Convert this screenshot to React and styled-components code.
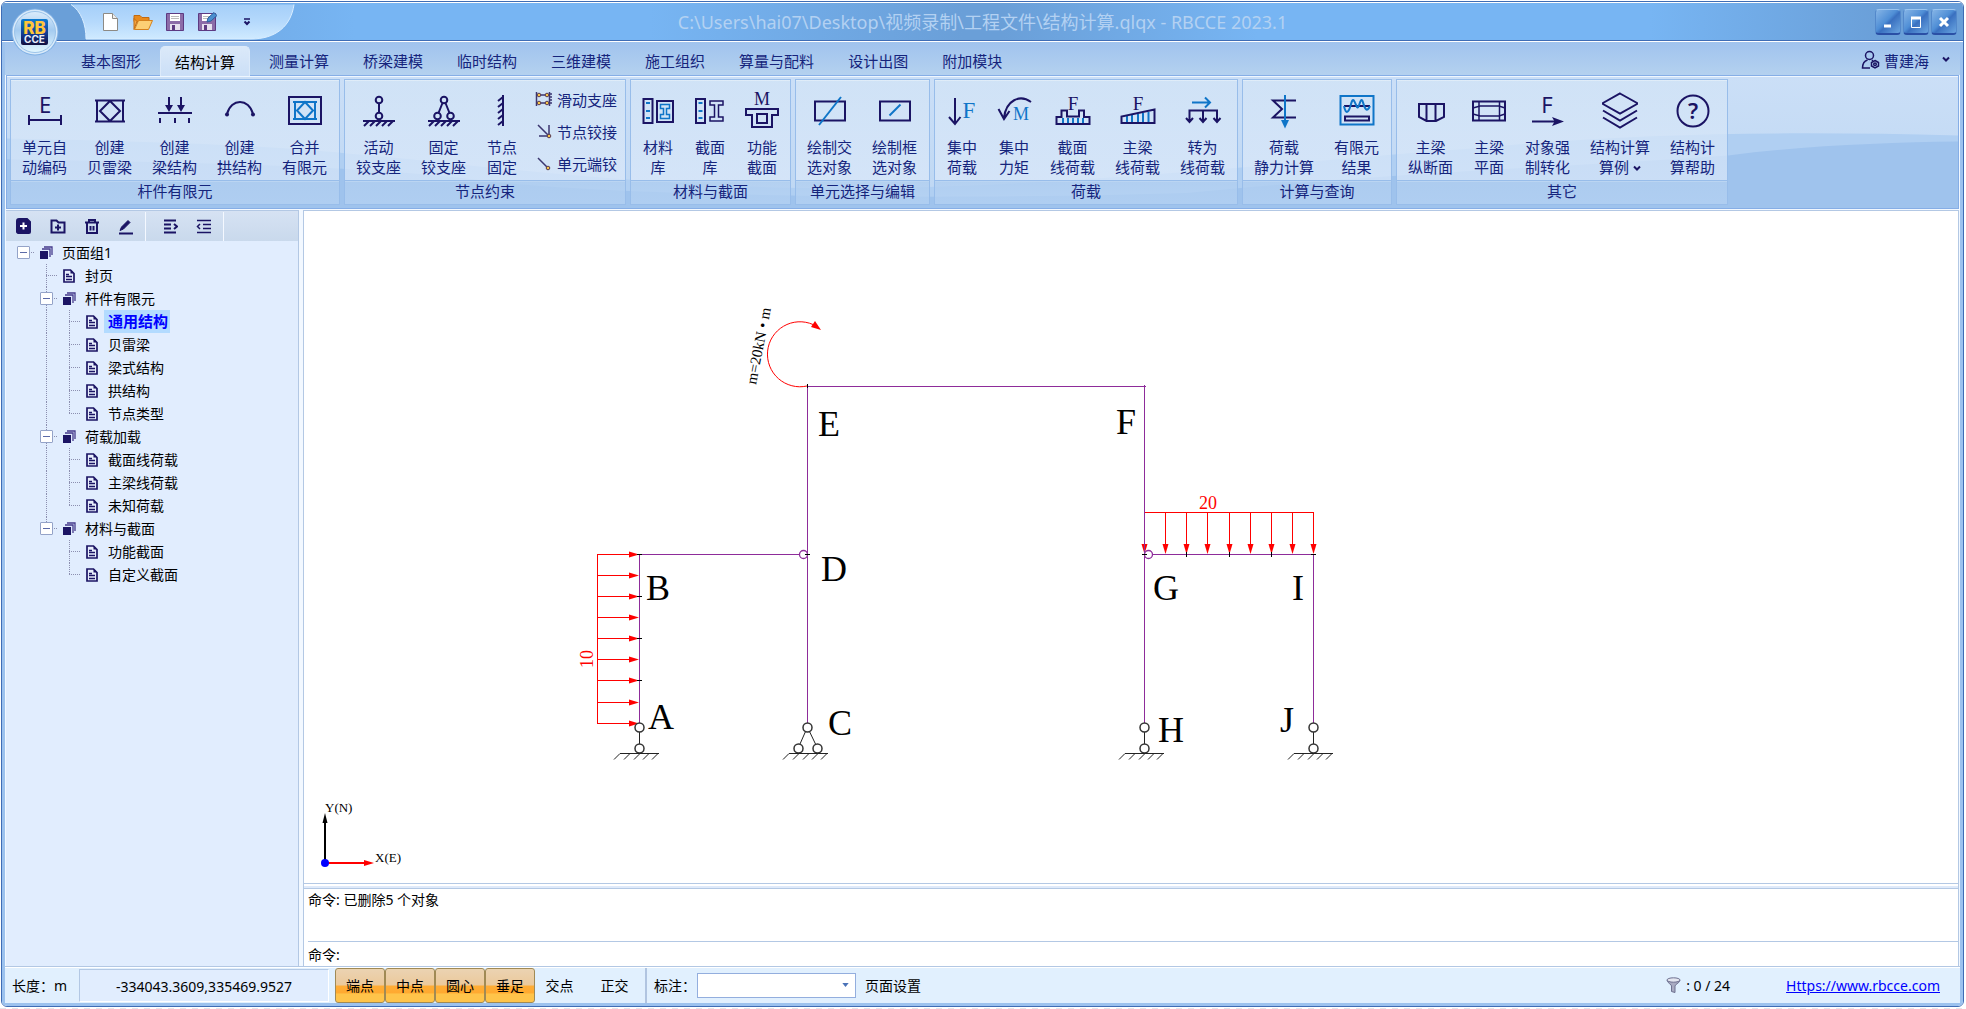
import { useState } from "react";
import styled, { createGlobalStyle } from "styled-components";

const NAVY = "#1b1464";
const BLUE = "#0f75c8";
const SERIF = '"Liberation Serif", "Noto Sans CJK SC", serif';
const SANS = '"Noto Sans", "Noto Sans CJK SC", sans-serif';

/* ================= ribbon icons (36 x 38) ================= */
const HATCH = [8, 14, 20, 26, 32];

const ground = (
  <path d={`M2 29H34${HATCH.map((x) => `M${x} 29l-5 5`).join("")}`} />
);

const bailey = (
  <path d="M3 8.5H33M3 29.5H33M5 8.5V29.5M31 8.5V29.5M18 9L28 19L18 29L8 19Z" />
);

const ICONS = {
  unitNo: (
    <>
      <path d="M2 28H34M2 23V33M34 23V33" />
      <text x="18" y="21" fontSize="22">E</text>
    </>
  ),
  bailey,
  beam: (
    <>
      <path d="M1 21H35M3 26V31M18 26V31M32 26V31M12 5V17M24 5V17" />
      <path className="fill" d="M8 13L12 20L16 13ZM20 13L24 20L28 13Z" />
    </>
  ),
  arch: (
    <>
      <path d="M5 22C9 6 27 6 31 22" />
      <circle className="fill" cx="5" cy="22.5" r="2" />
      <circle className="fill" cx="31" cy="22.5" r="2" />
    </>
  ),
  merge: (
    <>
      <rect x="2" y="5" width="32" height="27" />
      <path className="blue" d="M6 10H30M6 27H30M8 10V27M28 10V27M18 10L26 18.5L18 27L10 18.5Z" />
    </>
  ),
  roller: (
    <>
      <circle cx="18" cy="8" r="3.3" />
      <path d="M18 11.5V20.5" />
      <circle cx="18" cy="24" r="3.3" />
      {ground}
    </>
  ),
  pinned: (
    <>
      <circle cx="18" cy="8" r="3.3" />
      <path d="M16.5 11L12.5 21M19.5 11L23.5 21" />
      <circle cx="11.5" cy="24" r="3.3" />
      <circle cx="24.5" cy="24" r="3.3" />
      {ground}
    </>
  ),
  fixed: <path d="M19 3V34M19 5l-5 4M19 11l-5 4M19 17l-5 4M19 23l-5 4M19 29l-5 4" />,
  material: (
    <>
      <rect x="3.5" y="7" width="9" height="24" />
      <rect x="17" y="9" width="16" height="21" />
      <path className="blue" d="M6 11h4M6 19h4M6 26h4" />
      <path className="blue thin" d="M20.5 12.5h9v4h-3v6h3v4h-9v-4h3v-6h-3z" />
    </>
  ),
  section: (
    <>
      <rect x="4" y="7" width="9" height="24" />
      <path className="blue" d="M6.5 11h4M6.5 19h4M6.5 26h4" />
      <path className="thin" d="M18 9h13v4h-4.500v12h4.500v4h-13v-4h4.500v-12h-4.500z" />
    </>
  ),
  funcSection: (
    <>
      <text className="serif" x="18" y="13" fontSize="18">M</text>
      <path d="M2 17H34V23H28V35H8V23H2Z" />
      <rect x="13" y="22" width="10" height="9" />
    </>
  ),
  crossSelect: (
    <>
      <rect x="3" y="9.5" width="30" height="19" />
      <path className="blue" d="M7 33L29 5" />
    </>
  ),
  boxSelect: (
    <>
      <rect x="3" y="9.5" width="30" height="19" />
      <path className="blue" d="M12.5 23.5L23.5 12.5" />
    </>
  ),
  force: (
    <>
      <path d="M11 6V32M5 25L11 32L16.5 25" />
      <text className="serif blueText" x="25" y="26" fontSize="23">F</text>
    </>
  ),
  moment: (
    <>
      <path d="M35 10C24 2 10 8 8 26M2.5 17L8 27L13.5 19" />
      <text className="serif blueText" x="25" y="28" fontSize="18">M</text>
    </>
  ),
  sectionLoad: (
    <>
      <path className="blue" d="M8 26V31M13 26V31M18 26V31M23 26V31M28 26V31" />
      <path d="M1.5 32V25H6.5V18.5H12V24.5H24V18.5H29V25H34.5V32Z" />
      <text className="serif" x="18" y="18" fontSize="19">F</text>
    </>
  ),
  girderLoad: (
    <>
      <path className="blue" d="M7 24V30M12 23V30M18 22V30M23 21V30M28.5 20V30" />
      <path d="M1.5 31V24.5L34.5 17.5V31Z" />
      <text className="serif" x="18" y="18" fontSize="19">F</text>
    </>
  ),
  convert: (
    <>
      <path className="blue" d="M7 10.5H25M20 5.5L25 10.5L20 15.5" />
      <path d="M4.5 29.5V18.5H32V29.5M18 18.5V29.5M1 26l3.5 4l3.5-4M14.5 26l3.5 4l3.5-4M28.5 26l3.5 4l3.5-4" />
    </>
  ),
  calc: (
    <>
      <path d="M30 8.5H7L16 17L7 25.5H30" />
      <path className="blue" d="M19 3V30" />
      <path className="blueFill" d="M15 28H23L19 36.5Z" />
    </>
  ),
  result: (
    <>
      <path d="M5 14H31" />
      <rect x="6" y="24.5" width="24" height="4" />
      <path className="blue" d="M5 14C7 24 10 20 12 12C14 5 15 8 17.5 14C20 20 21 4 23.5 9C25 13 27 23 31 14" />
      <rect className="blue" x="1.5" y="4" width="33" height="28.5" />
    </>
  ),
  longSection: <path d="M6 12H31V25L23 29H13.5L6 25ZM13.5 12V29M22.5 12V29" />,
  plan: (
    <>
      <rect x="2" y="9.5" width="32" height="19" />
      <path className="thin" d="M8 9.5V28.5M28.5 9.5V28.5" />
      <path className="thin" d="M2 16L9 14H28L34 16M2 22L9 24H28L34 22" />
    </>
  ),
  forceConvert: (
    <>
      <text x="17" y="21" fontSize="22">F</text>
      <path d="M2 29.5H26" />
      <path className="fill" d="M22 25L34 29.5L22 34L24.5 29.5Z" />
    </>
  ),
  layers: (
    <path d="M18 1.5L35 11V12L18 21.5L1 12V11ZM1 18.5L18 28.5L35 18.5M1 25.5L18 35.5L35 25.5" />
  ),
  help: (
    <>
      <circle cx="18" cy="19" r="15.5" />
      <text x="18" y="27" fontSize="22" fontWeight="600">?</text>
    </>
  ),
};

const SMALL_ICONS = {
  slider: (
    <>
      <path d="M1.5 1V15M14.5 1V15M3 4H13M3 12H13" />
      <path d="M15 3h2M15 6h2M15 9h2M15 12h2" />
      {[[4, 4], [12, 4], [4, 12], [12, 12]].map(([x, y]) => (
        <circle key={`${x}-${y}`} className="joint" cx={x} cy={y} r="1.8" />
      ))}
    </>
  ),
  nodeHinge: (
    <>
      <path d="M3 2L13 12M4 13H13M14 2V12" />
      <circle className="joint" cx="14" cy="13" r="1.8" />
    </>
  ),
  endHinge: (
    <>
      <path d="M3 3L12 12" />
      <circle className="joint" cx="13" cy="13" r="1.8" />
    </>
  ),
};

/* ================= data ================= */
const TABS = [
  "基本图形", "结构计算", "测量计算", "桥梁建模", "临时结构",
  "三维建模", "施工组织", "算量与配料", "设计出图", "附加模块",
];

const GROUPS = [
  {
    title: "杆件有限元",
    items: [
      ["unitNo", "单元自", "动编码"],
      ["bailey", "创建", "贝雷梁"],
      ["beam", "创建", "梁结构"],
      ["arch", "创建", "拱结构"],
      ["merge", "合并", "有限元"],
    ],
  },
  {
    title: "节点约束",
    items: [
      ["roller", "活动", "铰支座"],
      ["pinned", "固定", "铰支座"],
      ["fixed", "节点", "固定"],
    ],
    small: [
      ["slider", "滑动支座"],
      ["nodeHinge", "节点铰接"],
      ["endHinge", "单元端铰"],
    ],
  },
  {
    title: "材料与截面",
    items: [
      ["material", "材料", "库"],
      ["section", "截面", "库"],
      ["funcSection", "功能", "截面"],
    ],
  },
  {
    title: "单元选择与编辑",
    items: [
      ["crossSelect", "绘制交", "选对象"],
      ["boxSelect", "绘制框", "选对象"],
    ],
  },
  {
    title: "荷载",
    items: [
      ["force", "集中", "荷载"],
      ["moment", "集中", "力矩"],
      ["sectionLoad", "截面", "线荷载"],
      ["girderLoad", "主梁", "线荷载"],
      ["convert", "转为", "线荷载"],
    ],
  },
  {
    title: "计算与查询",
    items: [
      ["calc", "荷载", "静力计算"],
      ["result", "有限元", "结果"],
    ],
  },
  {
    title: "其它",
    items: [
      ["longSection", "主梁", "纵断面"],
      ["plan", "主梁", "平面"],
      ["forceConvert", "对象强", "制转化"],
      ["layers", "结构计算", "算例", true],
      ["help", "结构计", "算帮助"],
    ],
  },
];

// guides: " " blank, "|" line, "t" tee, "l" corner, "+" / "r" / "e" expander (middle / root / last)
const TREE = [
  { guides: "r", folder: true, label: "页面组1" },
  { guides: " t", label: "封页" },
  { guides: " +", folder: true, label: "杆件有限元" },
  { guides: " |t", label: "通用结构" },
  { guides: " |t", label: "贝雷梁" },
  { guides: " |t", label: "梁式结构" },
  { guides: " |t", label: "拱结构" },
  { guides: " |l", label: "节点类型" },
  { guides: " +", folder: true, label: "荷载加载" },
  { guides: " |t", label: "截面线荷载" },
  { guides: " |t", label: "主梁线荷载" },
  { guides: " |l", label: "未知荷载" },
  { guides: " e", folder: true, label: "材料与截面" },
  { guides: "  t", label: "功能截面" },
  { guides: "  l", label: "自定义截面" },
];

const SNAPS = ["端点", "中点", "圆心", "垂足", "交点", "正交"];

// narrow buttons hold two characters, wide ones three or four
const widthOf = (a, b) => {
  const n = Math.max(a.length, b.length);
  return n > 3 ? 80 : n > 2 ? 65 : 52;
};

/* ================= drawing ================= */
const SIDE_LOAD_Y = [554, 575, 596, 617, 638, 659, 680, 702, 723];
const TOP_LOAD_X = [1144, 1165, 1186, 1207, 1229, 1250, 1271, 1292, 1313];

const NODE_LABELS = [
  ["A", 648, 729], ["B", 646, 600], ["C", 828, 735], ["D", 821, 581], ["E", 818, 436],
  ["F", 1116, 434], ["G", 1153, 600], ["H", 1158, 742], ["I", 1292, 600], ["J", 1280, 732],
];

function Ground({ x }) {
  return (
    <path
      d={`M${x - 19} 753.5H${x + 20}${[-19, -9, 1, 10, 19].map((d) => `M${x + d} 753.5l-6 6`).join("")}`}
    />
  );
}

function Support({ x }) {
  return (
    <g className="support">
      <path d={`M${x + 0.5} 732V744`} />
      <circle cx={x + 0.5} cy="727.5" r="4.5" />
      <circle cx={x + 0.5} cy="748.5" r="4.5" />
      <Ground x={x} />
    </g>
  );
}

function StructureDrawing() {
  return (
    <Drawing role="img" aria-label="结构计算简图">
      <g transform="translate(-304 -211)">
        <g className="load">
          <path d="M597.5 554V724" />
          {SIDE_LOAD_Y.map((y) => (
            <g key={y}>
              <path d={`M597 ${y + 0.5}H630`} />
              <path className="head" d={`M629 ${y - 2.5}V${y + 3.5}L639 ${y + 0.5}Z`} />
            </g>
          ))}
          <path d="M1144 512.5H1314" />
          {TOP_LOAD_X.map((x) => (
            <g key={x}>
              <path d={`M${x + 0.5} 512V545`} />
              <path className="head" d={`M${x - 2.5} 544H${x + 3.5}L${x + 0.5} 554Z`} />
            </g>
          ))}
          <path className="arc" d="M807 386A32.5 32.5 0 1 1 813 324.5" />
          <path className="head" d="M811 327L815 321L821 330Z" />
        </g>

        <g className="member">
          <path d="M639.5 554V723M639 554.5H799M807.5 385V723M807 386.5H1146M1144.5 385V723M1153 554.5H1314M1313.5 554V723" />
          <circle cx="803.5" cy="554.5" r="4" />
          <circle cx="1148.5" cy="554.5" r="4" />
        </g>
        <path
          className="tick"
          d="M637 554.5h5M637 596.5h5M637 638.5h5M637 680.5h5M805 554.5h5M1142 554.5h5M1186.5 552v5M1229.5 552v5M1271.5 552v5M1311 554.5h5M807.5 384v4"
        />

        <Support x={639} />
        <Support x={1144} />
        <Support x={1313} />
        <g className="support">
          <path d="M805.5 731.5L800 744M809.5 731.5L815.5 744" />
          <circle cx="807.5" cy="727.5" r="4.5" />
          <circle cx="798.5" cy="748.5" r="4.5" />
          <circle cx="817.5" cy="748.5" r="4.5" />
          <Ground x={808} />
        </g>

        {NODE_LABELS.map(([name, x, y]) => (
          <text key={name} x={x} y={y} fontSize="36">{name}</text>
        ))}
        <text x="1199" y="509" fontSize="18" className="redText">20</text>
        <text transform="translate(593 668) rotate(-90)" fontSize="18" className="redText">10</text>
        <text transform="translate(756 385) rotate(-79)" fontSize="15">m=20kN • m</text>

        {/* coordinate axes */}
        <path d="M325 863V822" stroke="#000" strokeWidth="2" />
        <path d="M322.5 823H327.5L325 813Z" fill="#000" />
        <path d="M325 863H365" stroke="#f00" strokeWidth="2" />
        <path d="M364 860V866L374 863Z" fill="#f00" />
        <circle cx="325" cy="863" r="4" fill="#00f" />
        <text x="325" y="812" fontSize="13">Y(N)</text>
        <text x="375" y="862" fontSize="13">X(E)</text>
      </g>
    </Drawing>
  );
}

/* ================= small drawings ================= */
function Logo() {
  return (
    <svg width="48" height="48" viewBox="0 0 48 48" aria-hidden="true">
      <defs>
        <linearGradient id="orb" x1="0" y1="0" x2="0" y2="1">
          <stop offset="0" stopColor="#dcecfb" />
          <stop offset="0.45" stopColor="#a4cbf0" />
          <stop offset="1" stopColor="#e3f7ff" />
        </linearGradient>
        <linearGradient id="plate" x1="0" y1="0" x2="0" y2="1">
          <stop offset="0" stopColor="#0d7bd0" />
          <stop offset="0.6" stopColor="#11378c" />
          <stop offset="1" stopColor="#14103f" />
        </linearGradient>
      </defs>
      <circle cx="24" cy="24" r="23.5" fill="#7fb0e4" />
      <circle cx="24" cy="24" r="22.5" fill="#d9eafa" />
      <circle cx="24" cy="24" r="20.5" fill="url(#orb)" stroke="#9cc4ea" />
      <rect x="10" y="11" width="27" height="26" rx="2" fill="url(#plate)" />
      <text x="23.5" y="26" textAnchor="middle" fontFamily="Inter" fontWeight="800" fontSize="17" fill="#ffc53a">RB</text>
      <text x="23.5" y="35" textAnchor="middle" fontFamily="Inter" fontWeight="700" fontSize="10" fill="#e9eefa">CCE</text>
    </svg>
  );
}

const floppy = (
  <>
    <path d="M1.5 1.5h17v17h-17z" fill="#8c6ca8" stroke="#5d3a82" />
    <path d="M5 2h10v7H5z" fill="#fff" />
    <path d="M6 4.5h8M6 6.5h8" stroke="#bbb" />
    <path d="M5 12h10v6H5z" fill="#e6e0ee" />
    <path d="M7 13h3v5H7z" fill="#5d3a82" />
  </>
);

const QUICK = {
  新建: (
    <>
      <path d="M2.5 1.5h9l5 5v12h-14z" fill="#fff" stroke="#8d8a84" />
      <path d="M11.5 1.5v5h5" fill="#eee" stroke="#8d8a84" />
    </>
  ),
  打开: (
    <>
      <path d="M1 3.5h6l2 2h7v4H1z" fill="#e98a1c" stroke="#c26a10" />
      <path d="M1 17.5V6.5l3 3z" fill="#f4a640" stroke="#c26a10" />
      <path d="M1.5 17.5l4-9h14l-4 9z" fill="#fccf74" stroke="#d5801c" />
    </>
  ),
  保存: floppy,
  另存为: (
    <>
      {floppy}
      <path d="M10 10l1-4 6-5.5 3 3-6 5.5z" fill="#4b8fd0" stroke="#2c5f9c" />
    </>
  ),
};

const TOOLS = [
  ["新建页面", <><path d="M3 1h8l3 3v10a1 1 0 0 1-1 1H3a2 2 0 0 1-2-1V3a2 2 0 0 1 2-2z" fill={NAVY} /><path d="M4 8h7M7.5 4.5v7" stroke="#fff" /></>],
  ["新建组", <><path d="M1.5 2.5h5l2 2h6v10h-13z" /><path d="M5 9.5h6M8 6.5v6" /></>],
  ["删除", <path d="M1 4.5h14M5 4V2h6v2M3 5v10h10V5M6.5 8v4.5M9.5 8v4.5" />],
  ["编辑", <><path d="M1 15.5h14" /><path d="M2 12.5l1.500-3.500L10 2.500l2 2L5.500 11z" fill={NAVY} strokeWidth="1" /></>],
  ["缩进", <path d="M2 2.5h12M2 6.5h7M2 10.5h7M2 14.5h12M12 6l3 2.5L12 11" />],
  ["取消缩进", <path d="M1 2.5h14M7 6.5h8M7 10.5h8M1 14.5h14M4 6L1.5 8.5L4 11" strokeWidth="1.5" />],
];

function Chevron() {
  return (
    <svg width="8" height="8" viewBox="0 0 8 8" aria-hidden="true">
      <path d="M1 1.5L4 4.5L7 1.5" fill="none" stroke={NAVY} strokeWidth="2" />
    </svg>
  );
}

const FolderIcon = () => (
  <svg width="14" height="14" viewBox="0 0 14 14" aria-hidden="true">
    <path d="M5 1H13V9M3 3H11V11" fill="none" stroke="#443a8c" strokeWidth="1.3" />
    <rect x="1" y="5" width="8" height="8" fill={NAVY} />
  </svg>
);

const PageIcon = () => (
  <svg width="12" height="14" viewBox="0 0 12 14" aria-hidden="true">
    <path d="M1 1h6.500L11 4.500V13H1z" fill="#e8eefc" stroke={NAVY} strokeWidth="1.7" />
    <path d="M7.500 1v3.500H11z" fill={NAVY} />
    <path d="M3 5.500h3M3 7.500h6M3 10.500h6" fill="none" stroke={NAVY} strokeWidth="1.3" />
  </svg>
);

/* ================= app ================= */
export default function App() {
  const [tab, setTab] = useState("结构计算");
  const [page, setPage] = useState("通用结构");
  const [snaps, setSnaps] = useState(["端点", "中点", "圆心", "垂足"]);
  const [command, setCommand] = useState("");

  const toggleSnap = (name) =>
    setSnaps((prev) =>
      prev.includes(name) ? prev.filter((s) => s !== name) : [...prev, name]
    );

  return (
    <Screen>
      <GlobalStyle />
      <Frame>
        <LogoButton aria-label="主菜单"><Logo /></LogoButton>
        <TitleBar>
          <QuickAccess>
            <QuickShape viewBox="0 0 224 36" preserveAspectRatio="none" aria-hidden="true">
              <defs>
                <linearGradient id="quick" x1="0" y1="0" x2="0" y2="1">
                  <stop offset="0" stopColor="#a5cff9" />
                  <stop offset="0.5" stopColor="#b5d9fc" />
                  <stop offset="1" stopColor="#cfeaff" />
                </linearGradient>
              </defs>
              <path d="M0 .5C10 7 15 20 15 35H180C205 35 220 22 223 .5" fill="url(#quick)" stroke="#d9edff" />
            </QuickShape>
            {Object.keys(QUICK).map((name) => (
              <QuickButton key={name} aria-label={name}>
                <svg width="20" height="20" viewBox="0 0 20 20" aria-hidden="true">{QUICK[name]}</svg>
              </QuickButton>
            ))}
            <QuickMore aria-label="自定义快速访问">
              <svg width="8" height="8" viewBox="0 0 8 8" aria-hidden="true">
                <path d="M1 1h6" stroke={NAVY} strokeWidth="1.3" />
                <path d="M1.5 3.5L4 6L6.5 3.5" fill="none" stroke={NAVY} strokeWidth="2" />
              </svg>
            </QuickMore>
          </QuickAccess>
          <Title>C:\Users\hai07\Desktop\视频录制\工程文件\结构计算.qlqx - RBCCE 2023.1</Title>
          <WindowButtons>
            <WindowButton aria-label="最小化">
              <svg width="14" height="14"><path d="M3 11h7" stroke="#fff" strokeWidth="3" /></svg>
            </WindowButton>
            <WindowButton aria-label="最大化">
              <svg width="14" height="14"><path d="M2.5 2v10.5h9V2" fill="none" stroke="#fff" /><path d="M2 3h10" stroke="#fff" strokeWidth="3" /></svg>
            </WindowButton>
            <WindowButton aria-label="关闭">
              <svg width="14" height="14"><path d="M3 3l8 8M11 3l-8 8" stroke="#fff" strokeWidth="3" /></svg>
            </WindowButton>
          </WindowButtons>
        </TitleBar>

        <Body>
          <TabStrip>
            <Tabs role="tablist">
              {TABS.map((name) => (
                <Tab key={name} role="tab" aria-selected={tab === name} $active={tab === name} onClick={() => setTab(name)}>
                  {name}
                </Tab>
              ))}
            </Tabs>
            <UserButton>
              <svg width="20" height="20" viewBox="0 0 20 20" fill="none" stroke={NAVY} strokeWidth="1.5" aria-hidden="true">
                <circle cx="8.5" cy="5.5" r="4" />
                <path d="M9 18H1.5C1.5 13.5 3.5 11 6.5 10M11 10L12 11" />
                <path d="M14 10.5l3.5 2v3.5L14 18l-3.5-2v-3.5z" />
                <circle cx="14" cy="14.3" r="1.3" />
              </svg>
              曹建海
              <UserArrow><Chevron /></UserArrow>
            </UserButton>
          </TabStrip>

          <Ribbon>
            <Wave viewBox="0 0 1952 133" preserveAspectRatio="none" aria-hidden="true">
              <path d="M0 63C150 66 260 70 340 78C440 86 560 104 760 112C1000 120 1300 84 1480 72C1640 56 1800 56 1952 60V133H0Z" fill="#b0cff2" />
              <path d="M0 84C200 88 360 90 480 106C640 124 1000 124 1180 118C1400 96 1560 92 1722 80C1800 70 1880 67 1952 66V133H0Z" fill="#9fc3ed" />
            </Wave>
            {GROUPS.map((g) => (
              <Group key={g.title}>
                <GroupBody>
                  {g.items.map(([icon, a, b, menu]) => (
                    <RibbonButton key={a + b} $width={widthOf(a, b)}>
                      <Glyph width="36" height="38" viewBox="0 0 36 38" aria-hidden="true">{ICONS[icon]}</Glyph>
                      <span>{a}</span>
                      <span>{b}{menu && <> <Chevron /></>}</span>
                    </RibbonButton>
                  ))}
                  {g.small && (
                    <SmallList>
                      {g.small.map(([icon, text]) => (
                        <SmallButton key={icon}>
                          <SmallGlyph width="18" height="16" viewBox="0 0 18 16" aria-hidden="true">{SMALL_ICONS[icon]}</SmallGlyph>
                          {text}
                        </SmallButton>
                      ))}
                    </SmallList>
                  )}
                </GroupBody>
                <GroupTitle>{g.title}</GroupTitle>
              </Group>
            ))}
          </Ribbon>

          <Main>
            <Sidebar>
              <ToolRow>
                {TOOLS.map(([name, icon], i) => (
                  <ToolCell key={name} $end={i === 3 || i === 5} $start={i === 4}>
                    <ToolButton aria-label={name}>
                      <svg width="16" height="17" viewBox="0 0 16 17" fill="none" stroke={NAVY} strokeWidth="2" aria-hidden="true">{icon}</svg>
                    </ToolButton>
                  </ToolCell>
                ))}
              </ToolRow>
              <Tree role="tree">
                {TREE.map((node) => (
                  <TreeRow key={node.label} role="treeitem" aria-selected={page === node.label} onClick={() => setPage(node.label)}>
                    {node.guides.split("").map((kind, i) => (
                      <Guide key={i} $kind={kind}>
                        {"+re".includes(kind) && <Expander aria-label="折叠" />}
                      </Guide>
                    ))}
                    <NodeIcon>{node.folder ? <FolderIcon /> : <PageIcon />}</NodeIcon>
                    <NodeLabel $selected={page === node.label}>{node.label}</NodeLabel>
                  </TreeRow>
                ))}
              </Tree>
            </Sidebar>

            <Workspace>
              <Canvas><StructureDrawing /></Canvas>
              <Splitter />
              <Log>命令: 已删除5 个对象</Log>
              <CommandRow>
                <label htmlFor="command">命令:</label>
                <CommandInput id="command" value={command} onChange={(e) => setCommand(e.target.value)} />
              </CommandRow>
            </Workspace>
          </Main>

          <StatusBar>
            <UnitText>长度：m</UnitText>
            <Coords>-334043.3609,335469.9527</Coords>
            {SNAPS.map((name) => (
              <SnapButton key={name} $on={snaps.includes(name)} aria-pressed={snaps.includes(name)} onClick={() => toggleSnap(name)}>
                {name}
              </SnapButton>
            ))}
            <StatusRule />
            <label htmlFor="dim">标注：</label>
            <SelectWrap>
              <DimSelect id="dim" defaultValue="">
                <option value=""></option>
              </DimSelect>
              <SelectArrow viewBox="0 0 8 5" aria-hidden="true">
                <path d="M0 0H8L4 5Z" fill="#4a72b8" />
              </SelectArrow>
            </SelectWrap>
            <PageSetup>页面设置</PageSetup>
            <FilterInfo>
              <svg width="15" height="16" viewBox="0 0 15 16" aria-hidden="true">
                <path d="M1 3C2 7 5.5 7 5.5 9V14.5L9 15.5V9C9 7 13 7 14 3Z" fill="#a9abc2" stroke="#6e7090" />
                <ellipse cx="7.5" cy="3" rx="6.5" ry="2.2" fill="#e4e6f0" stroke="#6e7090" />
              </svg>
              : 0 / 24
            </FilterInfo>
            <SiteLink href="#">Https://www.rbcce.com</SiteLink>
          </StatusBar>
        </Body>
      </Frame>
    </Screen>
  );
}

/* ================= styled ================= */
const GlobalStyle = createGlobalStyle`
  * { box-sizing: border-box; }
  body { margin: 0; background: #fff; }
  button, input, select { font: inherit; color: inherit; }
  button { border: none; background: none; padding: 0; cursor: pointer; }
  svg { flex: none; }
`;

const Screen = styled.div`
  height: 100vh;
  padding: 1px 2px 2px 1px;
  font-family: ${SANS};
  font-size: 14px;
  color: #000;
  background: repeating-linear-gradient(90deg, #e6e6ea 0 6px, #fff 6px 12px) bottom / 100% 1px no-repeat;
`;

const Frame = styled.div`
  position: relative;
  height: 100%;
  display: flex;
  flex-direction: column;
  border: 1px solid #3f6db5;
  border-radius: 6px;
  overflow: hidden;
`;

const LogoButton = styled.button`
  position: absolute;
  left: 9px;
  top: 6px;
  width: 48px;
  height: 48px;
  z-index: 2;
`;

const TitleBar = styled.header`
  flex: none;
  height: 40px;
  display: grid;
  grid-template-columns: 1fr auto 1fr;
  align-items: center;
  border-top: 1px solid #fff;
  border-bottom: 1px solid #fff;
  box-shadow: inset 0 -1px 0 #3f6db5;
  background: linear-gradient(90deg, #6a9fd8 0%, #6a9fd8 4%, #77b5f3 18%, #77b5f3 33%, #6a9fd8 49%, #6a9fd8 51%, #77b5f3 64%, #77b5f3 84%, #6a9fd8 96%);
`;

const QuickAccess = styled.div`
  position: relative;
  display: flex;
  align-items: center;
  width: 224px;
  height: 36px;
  margin: 0 0 1px 69px;
  padding-left: 24px;
`;

const QuickShape = styled.svg`
  position: absolute;
  inset: 0;
  width: 100%;
  height: 100%;
`;

const QuickButton = styled.button`
  position: relative;
  width: 32px;
  height: 32px;
  display: grid;
  place-items: center;
`;

const QuickMore = styled(QuickButton)`
  margin-left: 8px;
`;

const Title = styled.div`
  font-size: 18px;
  line-height: 24px;
  color: #b3d1f2;
  white-space: nowrap;
`;

const WindowButtons = styled.div`
  justify-self: end;
  display: flex;
  gap: 2px;
  padding-right: 6px;
`;

const WindowButton = styled.button`
  width: 26px;
  height: 26px;
  display: grid;
  place-items: center;
  border-radius: 4px;
  border: 1px solid #5388cb;
  border-top-color: #9cc6f0;
  border-bottom: 2px solid #2a4fa5;
  background: linear-gradient(135deg, #86b5e6 0%, #4f8ed6 45%, #3a70c0 55%, #6aa5e0 100%);
`;

const Body = styled.div`
  flex: 1;
  min-height: 0;
  display: flex;
  flex-direction: column;
  border: solid #9cc2ee;
  border-width: 0 3px 3px;
  padding: 0 1px;
  background: linear-gradient(#a0c3ee, #b4d1ef 33px, #f2f8ff 33px);
`;

const TabStrip = styled.div`
  flex: none;
  display: flex;
  justify-content: space-between;
  height: 33px;
  padding-left: 60px;
  color: #15247c;
  font-size: 15px;
`;

const Tabs = styled.div`
  display: flex;
  align-items: flex-end;
  gap: 4px;
`;

const Tab = styled.button`
  position: relative;
  z-index: 1;
  height: 30px;
  margin-bottom: ${({ $active }) => ($active ? "-1px" : "0")};
  padding: 0 14px;
  border: 1px solid ${({ $active }) => ($active ? "#dceafa" : "transparent")};
  border-bottom: none;
  border-radius: 5px 5px 0 0;
  color: ${({ $active }) => ($active ? "#000" : "inherit")};
  background: ${({ $active }) => ($active ? "linear-gradient(#dbe9f9, #cbdff7)" : "none")};
`;

const UserButton = styled.button`
  display: flex;
  align-items: center;
  gap: 3px;
  padding: 3px 9px 0 0;
`;

const UserArrow = styled.span`
  display: flex;
  margin-left: 10px;
`;

const Ribbon = styled.section`
  position: relative;
  flex: none;
  display: flex;
  gap: 4px;
  height: 134px;
  margin-bottom: 1px;
  padding: 3px;
  border: 1px solid #86aee6;
  background: linear-gradient(#cbdff7, #bed7f3);
  box-shadow: inset 0 1px 0 #eef6ff;
`;

const Wave = styled.svg`
  position: absolute;
  inset: 0;
  width: 100%;
  height: 100%;
`;

const Group = styled.div`
  position: relative;
  height: 126px;
  display: flex;
  flex-direction: column;
  border: 1px solid #98bdea;
  box-shadow: inset 0 1px 0 #fff;
`;

const GroupBody = styled.div`
  flex: 1;
  display: flex;
  padding: 0 2px 0 1px;
  border-bottom: 1px solid #98bdea;
  box-shadow: 0 1px 0 #e3effb;
  background: linear-gradient(rgba(210, 228, 246, 0.7), rgba(220, 233, 250, 0.7));
`;

const RibbonButton = styled.button`
  display: flex;
  flex-direction: column;
  align-items: center;
  width: ${({ $width }) => $width}px;
  padding-top: 12px;
  color: #15247c;
  font-size: 15px;
  line-height: 20px;
  white-space: nowrap;
`;

const Glyph = styled.svg`
  margin-bottom: 7px;
  overflow: visible;
  fill: none;
  stroke: ${NAVY};
  stroke-width: 2;

  .thin { stroke-width: 1.5; }
  .blue { stroke: ${BLUE}; }
  .fill { fill: ${NAVY}; stroke: none; }
  .blueFill { fill: ${BLUE}; stroke: none; }
  text { fill: ${NAVY}; stroke: none; font-family: ${SANS}; text-anchor: middle; }
  text.serif { font-family: ${SERIF}; }
  text.blueText { fill: ${BLUE}; }
`;

const SmallList = styled.div`
  display: flex;
  flex-direction: column;
  padding: 3px 6px 0 7px;
`;

const SmallButton = styled.button`
  display: flex;
  align-items: center;
  gap: 4px;
  height: 32px;
  color: #15247c;
  font-size: 15px;
  white-space: nowrap;
`;

const SmallGlyph = styled.svg`
  fill: none;
  stroke: #3b3670;
  stroke-width: 1.5;

  .joint { fill: #f7c64a; stroke: #5a3a50; stroke-width: 1; }
`;

const GroupTitle = styled.div`
  height: 23px;
  color: #15247c;
  font-size: 15px;
  line-height: 21px;
  text-align: center;
  background: linear-gradient(rgba(176, 206, 240, 0.8), rgba(186, 213, 244, 0.6));
`;

const Main = styled.main`
  flex: 1;
  min-height: 0;
  display: flex;
  gap: 4px;
`;

const Sidebar = styled.aside`
  flex: none;
  width: 293px;
  border: solid #b3c8e4;
  border-width: 1px 1px 0 0;
  background: #e1edfe;
`;

const ToolRow = styled.div`
  display: flex;
  height: 30px;
  padding: 1px 0 0 1px;
  background: linear-gradient(#d6e2f3, #c9d9ec);
`;

const ToolCell = styled.div`
  display: flex;
  align-items: center;
  padding-left: ${({ $start }) => ($start ? "7px" : "0")};
  padding-right: ${({ $end }) => ($end ? "2px" : "0")};
  border-right: ${({ $end }) => ($end ? "1px solid #f4f8ff" : "none")};
`;

const ToolButton = styled.button`
  width: 34px;
  height: 28px;
  display: grid;
  place-items: center;
`;

const Tree = styled.ul`
  list-style: none;
  margin: 0;
  padding: 0 0 0 6px;
`;

const TreeRow = styled.li`
  display: flex;
  align-items: center;
  height: 23px;
  cursor: default;
`;

const V_DOTS = "repeating-linear-gradient(#8c8fb0 0 1px, transparent 1px 2px)";
const H_DOTS = "repeating-linear-gradient(90deg, #8c8fb0 0 1px, transparent 1px 2px)";
const GUIDES = {
  "|": `${V_DOTS} 11px 0 / 1px 100% no-repeat`,
  t: `${V_DOTS} 11px 0 / 1px 100% no-repeat, ${H_DOTS} 11px 11px / 16px 1px no-repeat`,
  "+": `${V_DOTS} 11px 0 / 1px 100% no-repeat, ${H_DOTS} 11px 11px / 16px 1px no-repeat`,
  l: `${V_DOTS} 11px 0 / 1px 11px no-repeat, ${H_DOTS} 11px 11px / 16px 1px no-repeat`,
  e: `${V_DOTS} 11px 0 / 1px 11px no-repeat, ${H_DOTS} 11px 11px / 16px 1px no-repeat`,
  r: `${H_DOTS} 11px 11px / 16px 1px no-repeat`,
};

const Guide = styled.span`
  width: 23px;
  height: 23px;
  display: grid;
  place-items: center;
  background: ${({ $kind }) => GUIDES[$kind] || "none"};
`;

const Expander = styled.button`
  width: 13px;
  height: 13px;
  border: 1px solid #94a3c8;
  border-radius: 1px;
  background: linear-gradient(#5c6ba8, #5c6ba8) center / 7px 1px no-repeat, #fff;
`;

const NodeIcon = styled.span`
  width: 23px;
  padding-right: 2px;
  display: grid;
  place-items: center;
`;

const NodeLabel = styled.span`
  height: 23px;
  padding: 0 2px 0 4px;
  line-height: 23px;
  font-size: ${({ $selected }) => ($selected ? "15px" : "14px")};
  font-weight: ${({ $selected }) => ($selected ? 700 : 400)};
  color: ${({ $selected }) => ($selected ? "#0000ff" : "#000")};
  background: ${({ $selected }) => ($selected ? "#b3dbff" : "none")};
`;

const Workspace = styled.section`
  flex: 1;
  min-width: 0;
  display: flex;
  flex-direction: column;
  border: solid #b3c8e4;
  border-width: 1px 1px 0;
  background: #fff;
`;

const Canvas = styled.div`
  flex: 1;
  min-height: 0;
  display: flex;
`;

const Drawing = styled.svg`
  flex: 1;
  width: 100%;
  height: 100%;

  path { fill: none; }
  text { font-family: ${SERIF}; fill: #000; }
  .redText { fill: #f00; }
  .load path { stroke: #f00; }
  .load .head { fill: #f00; stroke: none; }
  .member path { stroke: #8e2c9a; }
  .member circle { fill: #fff; stroke: #8e2c9a; stroke-width: 1.3; }
  .tick { stroke: #000; }
  .support path { stroke: #222; }
  .support circle { fill: #fff; stroke: #333; stroke-width: 1.5; }
  path[fill="#000"] { fill: #000; }
  path[fill="#f00"] { fill: #f00; }
`;

const Splitter = styled.div`
  flex: none;
  height: 6px;
  border: solid #b3c8e4;
  border-width: 1px 0;
  background: linear-gradient(#fff 0 2px, #dfeafa 2px);
`;

const Log = styled.div`
  flex: none;
  height: 52px;
  padding: 1px 4px;
  line-height: 20px;
`;

const CommandRow = styled.div`
  flex: none;
  display: flex;
  align-items: center;
  gap: 4px;
  height: 25px;
  margin-left: 4px;
  border-top: 1px solid #b3c8e4;
`;

const CommandInput = styled.input`
  flex: 1;
  border: none;
  outline: none;
  background: none;
  padding: 0;
`;

const StatusBar = styled.footer`
  flex: none;
  display: flex;
  align-items: center;
  height: 37px;
  margin: 0 -1px;
  padding-left: 7px;
  border-top: 1px solid #b3c8e4;
  background: #e1f0fe;
  box-shadow: inset 0 1px 0 #fff;
`;

const UnitText = styled.span`
  width: 67px;
`;

const Coords = styled.span`
  width: 250px;
  height: 33px;
  margin-right: 6px;
  line-height: 33px;
  text-align: center;
  border: 1px solid #b3c8e4;
  border-right-color: #fff;
  border-bottom-color: #fff;
  background: #e1edfe;
`;

const SnapButton = styled.button`
  width: ${({ $on }) => ($on ? "50px" : "55px")};
  height: 35px;
  border: 1px solid ${({ $on }) => ($on ? "#a08a55" : "transparent")};
  border-radius: 3px;
  background: ${({ $on }) =>
    $on ? "linear-gradient(#ebd3b2 0%, #ebc99c 48%, #ffad36 52%, #ffa930 72%, #ffc44a 76%)" : "none"};
  padding-right: ${({ $on }) => ($on ? "0" : "6px")};
`;

const StatusRule = styled.span`
  width: 2px;
  height: 35px;
  margin-right: 7px;
  background: #b0c4e0;
`;

const SelectWrap = styled.span`
  position: relative;
  display: flex;
  margin: 0 9px 0 1px;
`;

const DimSelect = styled.select`
  appearance: none;
  width: 159px;
  height: 25px;
  border: 1px solid #93aede;
  border-radius: 0;
  background: #fff;
`;

const SelectArrow = styled.svg`
  position: absolute;
  right: 7px;
  top: 10px;
  width: 7px;
  height: 4px;
  pointer-events: none;
`;

const PageSetup = styled.button`
  height: 34px;
`;

const FilterInfo = styled.span`
  display: flex;
  align-items: center;
  gap: 5px;
  margin-left: auto;
`;

const SiteLink = styled.a`
  margin: 0 20px 0 56px;
  color: #0000ff;
`;
